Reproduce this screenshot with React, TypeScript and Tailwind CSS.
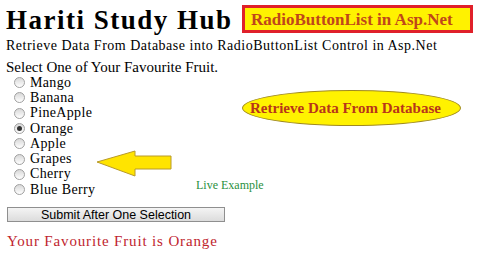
import React from "react";

const fruits = ["Mango", "Banana", "PineApple", "Orange", "Apple", "Grapes", "Cherry", "Blue Berry"];
const selected = "Orange";

function Radio({ checked }: { checked: boolean }) {
  return (
    <span className="w-[11px] h-[11px] rounded-full border border-[#a0a0a0] bg-gradient-to-b from-[#d8d8d8] to-[#ffffff] flex items-center justify-center shrink-0">
      {checked && <span className="w-[5px] h-[5px] rounded-full bg-[#333]" />}
    </span>
  );
}

function Arrow() {
  return (
    <svg width="76" height="28" viewBox="0 0 76 28">
      <polygon
        points="1,12 39,1 39,6 75,6 75,19 39,19 39,26"
        fill="#ffe400"
        stroke="#b89a2a"
        strokeWidth="1"
        strokeLinejoin="round"
      />
    </svg>
  );
}

export default function App() {
  return (
    <div className="w-[480px] h-[270px] bg-white overflow-hidden font-['Liberation_Serif',serif] text-black relative">
      {/* Header */}
      <div className="flex items-start justify-between pl-[6px] pr-[7px] pt-[5px]">
        <h1 className="text-[27px] font-bold leading-[28px] tracking-[1.5px] mt-[1px] whitespace-nowrap">Hariti Study Hub</h1>
        <div className="w-[231px] h-[28px] border-[3px] border-[#e0202a] bg-[#fff200] flex items-center pl-[6px]">
          <span className="text-[17px] font-bold text-[#c0461a] leading-none whitespace-nowrap">
            RadioButtonList in Asp.Net
          </span>
        </div>
      </div>

      <p className="pl-[6px] mt-[4px] text-[14px] leading-[16px] tracking-[0.5px] whitespace-nowrap">
        Retrieve Data From Database into RadioButtonList Control in Asp.Net
      </p>

      <p className="pl-[6px] mt-[6px] text-[15px] leading-[15px] whitespace-nowrap">
        Select One of Your Favourite Fruit.
      </p>

      <div className="flex">
        {/* Radio list */}
        <ul className="pl-[14px] w-[96px] shrink-0">
          {fruits.map((f) => (
            <li key={f} className="flex items-center gap-[5px] h-[15.3px] text-[14px] tracking-[0.35px] whitespace-nowrap">
              <Radio checked={f === selected} />
              <span className="leading-none">{f}</span>
            </li>
          ))}
        </ul>

        {/* Right side notes */}
        <div className="flex flex-col">
          <div className="ml-[146px] mt-[15px] w-[219px] h-[36px] rounded-[50%] bg-[#fff200] border border-[#a08a20] flex items-center pl-[7px]">
            <span className="text-[15px] font-bold text-[#b8351a] leading-none whitespace-nowrap">
              Retrieve Data From Database
            </span>
          </div>
          <div className="mt-[24px]">
            <Arrow />
          </div>
          <span className="ml-[100px] mt-[1px] text-[12px] text-[#2a9040] leading-none whitespace-nowrap">
            Live Example
          </span>
        </div>
      </div>

      <button
        type="button"
        className="ml-[7px] mt-[10px] w-[218px] h-[15px] border border-[#8f8f8f] bg-gradient-to-b from-[#f4f4f4] to-[#dcdcdc] text-[12.5px] leading-none font-['Liberation_Sans',sans-serif] text-black flex items-center justify-center"
      >
        Submit After One Selection
      </button>

      <p className="pl-[7px] mt-[12px] text-[15px] leading-none text-[#c0242e] tracking-[0.85px] whitespace-nowrap">
        Your Favourite Fruit is Orange
      </p>
    </div>
  );
}
